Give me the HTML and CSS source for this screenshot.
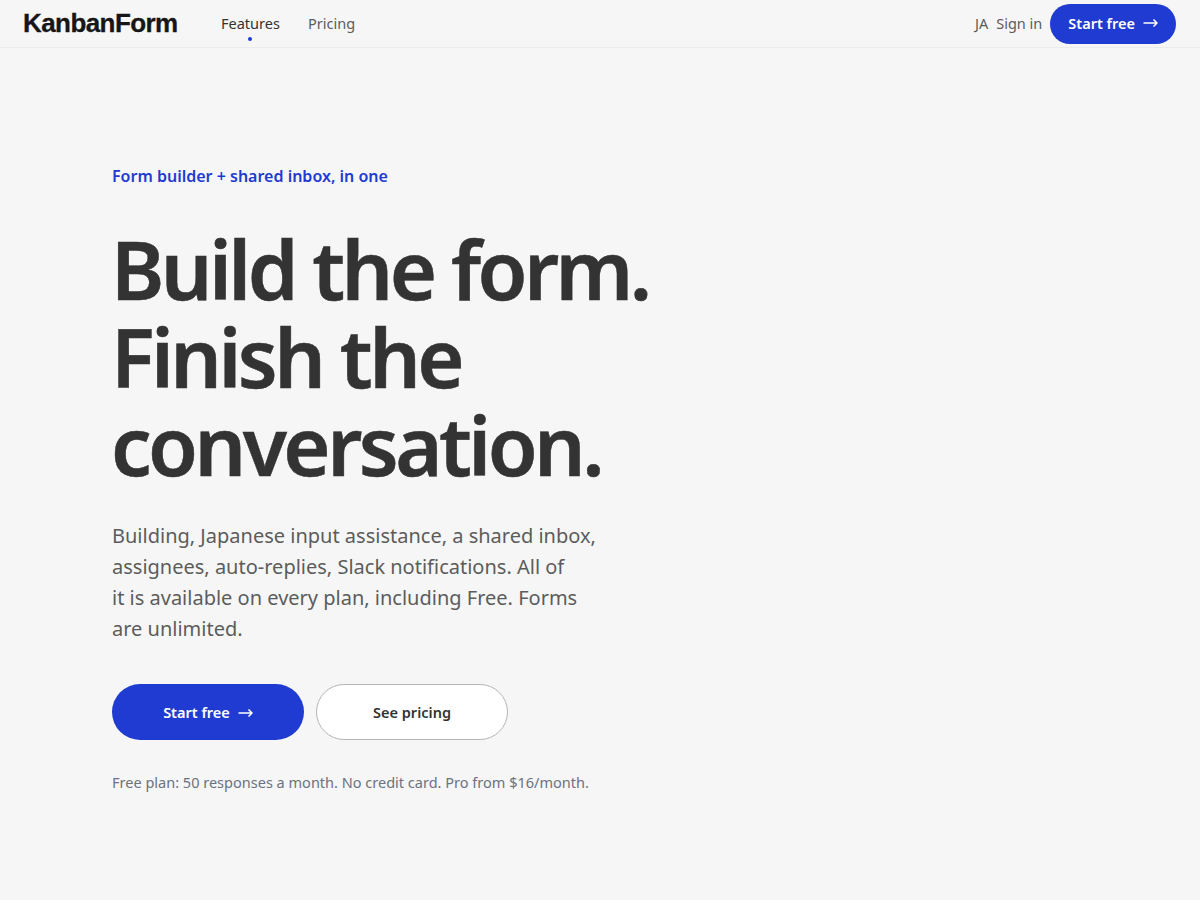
FILE: index.html
```html
<!DOCTYPE html>
<html lang="en">
<head>
    <meta charset="UTF-8">
    <meta name="viewport" content="width=device-width, initial-scale=1.0">
    <title>KanbanForm</title>
    <link rel="stylesheet" href="styles.css">
</head>
<body>
    <header class="topbar">
        <div class="topbar-left">
            <a class="logo" href="#">KanbanForm</a>
            <nav class="nav">
                <a class="nav-link active" href="#">Features</a>
                <a class="nav-link" href="#">Pricing</a>
            </nav>
        </div>
        <div class="topbar-right">
            <a class="lang" href="#">JA</a>
            <a class="signin" href="#">Sign in</a>
            <a class="btn-small" href="#">Start free
                <svg class="arrow" width="15" height="10" viewBox="0 0 15 10"><path d="M0.5 5H14M10.5 1.5L14 5L10.5 8.5" fill="none" stroke="currentColor" stroke-width="1.5"/></svg>
            </a>
        </div>
    </header>

    <main class="hero">
        <p class="eyebrow">Form builder + shared inbox, in one</p>
        <h1>Build the form.<br>Finish the<br>conversation.</h1>
        <p class="lead">Building, Japanese input assistance, a shared inbox,<br>assignees, auto-replies, Slack notifications. All of<br>it is available on every plan, including Free. Forms<br>are unlimited.</p>
        <div class="actions">
            <a class="btn btn-primary" href="#">Start free
                <svg class="arrow" width="15" height="10" viewBox="0 0 15 10"><path d="M0.5 5H14M10.5 1.5L14 5L10.5 8.5" fill="none" stroke="currentColor" stroke-width="1.5"/></svg>
            </a>
            <a class="btn btn-secondary" href="#">See pricing</a>
        </div>
        <p class="note">Free plan: 50 responses a month. No credit card. Pro from $16/month.</p>
    </main>
</body>
</html>
```

FILE: styles.css
```css
* {
    box-sizing: border-box;
}

body {
    margin: 0;
    background: #f6f6f6;
    color: #333;
    font-family: "Noto Sans", sans-serif;
}

a {
    text-decoration: none;
    color: inherit;
}

.topbar {
    height: 48px;
    display: flex;
    align-items: center;
    justify-content: space-between;
    padding: 0 24px 0 23px;
    border-bottom: 1px solid #ebebeb;
}

.topbar-left {
    display: flex;
    align-items: center;
    gap: 44px;
}

.logo {
    width: 154px;
    font-family: "Liberation Sans", Arial, sans-serif;
    font-weight: 700;
    font-size: 26px;
    letter-spacing: -0.022em;
    -webkit-text-stroke: 0.3px #161616;
    color: #161616;
}

.nav {
    display: flex;
    gap: 28px;
}

.nav-link {
    position: relative;
    font-size: 14.53px;
    line-height: 20px;
    padding-bottom: 2px;
    color: #5c5c5c;
}

.nav-link.active {
    color: #333;
}

.nav-link.active::after {
    content: "";
    position: absolute;
    left: 50%;
    bottom: -6px;
    width: 4px;
    height: 4px;
    margin-left: -2px;
    border-radius: 50%;
    background: #1f3bd1;
}

.topbar-right {
    display: flex;
    align-items: center;
    gap: 8px;
    font-size: 14.53px;
    line-height: 20px;
    color: #5c5c5c;
}

.lang,
.signin {
    padding-bottom: 2px;
}

.btn-small {
    display: flex;
    align-items: center;
    gap: 8px;
    height: 40px;
    padding: 0 18px 1px;
    border-radius: 20px;
    background: #1f3bd1;
    color: #fff;
    font-weight: 600;
}

.hero {
    padding: 116px 112px 0;
}

.eyebrow {
    margin: 0;
    font-size: 16px;
    line-height: 24px;
    font-weight: 600;
    color: #1f3bd1;
}

h1 {
    margin: 37px 0 0 -1px;
    font-size: 81px;
    line-height: 88px;
    font-weight: 600;
    letter-spacing: -0.044em;
    -webkit-text-stroke: 0.5px #333;
    color: #333;
}

.lead {
    margin: 31px 0 0;
    font-size: 20px;
    line-height: 31px;
    color: #5c5c5c;
}

.actions {
    display: flex;
    gap: 12px;
    margin-top: 40px;
}

.btn {
    display: flex;
    align-items: center;
    justify-content: center;
    gap: 8px;
    width: 192px;
    height: 56px;
    border-radius: 28px;
    font-size: 14.53px;
    font-weight: 600;
}

.btn .arrow {
    margin-top: 1px;
}

.btn-primary {
    background: #1f3bd1;
    color: #fff;
}

.btn-secondary {
    background: #fff;
    border: 1px solid #b5b5b5;
    color: #333;
}

.note {
    margin: 32px 0 0;
    font-size: 14.53px;
    line-height: 21px;
    color: #6b7280;
}
```
